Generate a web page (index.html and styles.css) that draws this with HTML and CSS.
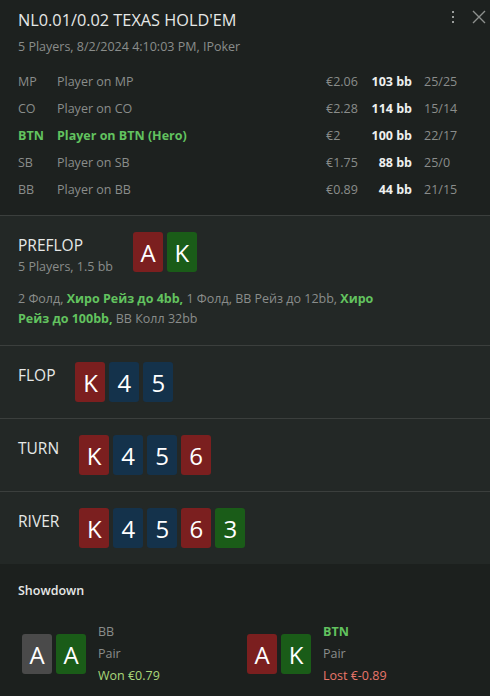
FILE: index.html
```html
<!DOCTYPE html>
<html lang="en">
<head>
    <meta charset="UTF-8">
    <meta name="viewport" content="width=device-width, initial-scale=1.0">
    <title>Hand History</title>
    <link rel="stylesheet" href="styles.css">
</head>
<body>
    <div class="hand-panel">
        <div class="hand-header">
            <div class="title-row">
                <h1>NL0.01/0.02 TEXAS HOLD'EM</h1>
                <div class="header-icons">
                    <svg class="icon-more" width="6" height="16" viewBox="0 0 6 16">
                        <rect x="2" y="2" width="2" height="2" fill="#9a9d9b"/>
                        <rect x="2" y="7" width="2" height="2" fill="#9a9d9b"/>
                        <rect x="2" y="12" width="2" height="2" fill="#9a9d9b"/>
                    </svg>
                    <svg class="icon-close" width="14" height="14" viewBox="0 0 14 14">
                        <path d="M1 1 L13 13 M13 1 L1 13" stroke="#8d908e" stroke-width="1.4" fill="none"/>
                    </svg>
                </div>
            </div>
            <div class="subtitle">5 Players, 8/2/2024 4:10:03 PM, IPoker</div>

            <div class="players">
                <div class="pos">MP</div><div class="name">Player on MP</div><div class="money">€2.06</div><div class="stack">103 bb</div><div class="ratio">25/25</div>
                <div class="pos">CO</div><div class="name">Player on CO</div><div class="money">€2.28</div><div class="stack">114 bb</div><div class="ratio">15/14</div>
                <div class="pos hero">BTN</div><div class="name hero">Player on BTN (Hero)</div><div class="money">€2</div><div class="stack">100 bb</div><div class="ratio">22/17</div>
                <div class="pos">SB</div><div class="name">Player on SB</div><div class="money">€1.75</div><div class="stack">88 bb</div><div class="ratio">25/0</div>
                <div class="pos">BB</div><div class="name">Player on BB</div><div class="money">€0.89</div><div class="stack">44 bb</div><div class="ratio">21/15</div>
            </div>
        </div>

        <div class="street">
            <div class="street-head">
                <div>
                    <div class="street-label">PREFLOP</div>
                    <div class="street-sub">5 Players, 1.5 bb</div>
                </div>
                <div class="cards">
                    <span class="card red">A</span>
                    <span class="card green">K</span>
                </div>
            </div>
            <p class="actions">2 Фолд, <b>Хиро Рейз до 4bb,</b> 1 Фолд, BB Рейз до 12bb, <b>Хиро Рейз до 100bb,</b> BB Колл 32bb</p>
        </div>

        <div class="street">
            <div class="street-head">
                <div class="street-label">FLOP</div>
                <div class="cards">
                    <span class="card red">K</span>
                    <span class="card blue">4</span>
                    <span class="card blue">5</span>
                </div>
            </div>
        </div>

        <div class="street">
            <div class="street-head">
                <div class="street-label">TURN</div>
                <div class="cards">
                    <span class="card red">K</span>
                    <span class="card blue">4</span>
                    <span class="card blue">5</span>
                    <span class="card red">6</span>
                </div>
            </div>
        </div>

        <div class="street">
            <div class="street-head">
                <div class="street-label">RIVER</div>
                <div class="cards">
                    <span class="card red">K</span>
                    <span class="card blue">4</span>
                    <span class="card blue">5</span>
                    <span class="card red">6</span>
                    <span class="card green">3</span>
                </div>
            </div>
        </div>

        <div class="showdown">
            <div class="showdown-title">Showdown</div>
            <div class="hands">
                <div class="hand">
                    <div class="cards">
                        <span class="card gray">A</span>
                        <span class="card green">A</span>
                    </div>
                    <div class="hand-info">
                        <div>BB</div>
                        <div>Pair</div>
                        <div class="won">Won €0.79</div>
                    </div>
                </div>
                <div class="hand">
                    <div class="cards">
                        <span class="card red">A</span>
                        <span class="card green">K</span>
                    </div>
                    <div class="hand-info">
                        <div class="hero">BTN</div>
                        <div>Pair</div>
                        <div class="lost">Lost €-0.89</div>
                    </div>
                </div>
            </div>
        </div>
    </div>
</body>
</html>
```

FILE: styles.css
```css
body {
    margin: 0;
    padding: 0;
    background-color: #1c201e;
    font-family: "Open Sans", "Noto Sans", sans-serif;
    color: #8a8d8b;
}
.hand-panel {
    width: 490px;
    height: 696px;
    overflow: hidden;
}
.hand-header {
    background-color: #1d211f;
    padding: 8px 0 12px 18px;
}
.title-row {
    display: flex;
    justify-content: space-between;
    align-items: flex-start;
}
h1 {
    margin: 0;
    font-size: 16.3px;
    font-weight: normal;
    line-height: 24px;
    color: #e6e8e7;
}
.header-icons {
    display: flex;
    align-items: center;
    gap: 16px;
    padding-right: 4px;
    margin-top: 1px;
}
.icon-more,
.icon-close {
    display: block;
}
.subtitle {
    margin-top: 6px;
    font-size: 12.5px;
    line-height: 18px;
}
.players {
    display: grid;
    grid-template-columns: 39px 1fr 44px 42px 48px;
    margin-top: 12px;
    padding-right: 30px;
    font-size: 12.5px;
    line-height: 27px;
}
.players .stack {
    justify-self: end;
    white-space: nowrap;
    font-weight: bold;
    color: #eef0ef;
}
.players .ratio {
    padding-left: 12px;
}
.hero {
    color: #62c35f;
    font-weight: bold;
}
.street {
    background-color: #232826;
    border-top: 1px solid #3b3f3d;
    padding: 16px 18px;
}
.street-head {
    display: flex;
    align-items: flex-start;
    gap: 20px;
}
.street-label {
    font-size: 15.5px;
    line-height: 26px;
    color: #e6e8e7;
}
.street-sub {
    font-size: 12.5px;
    line-height: 18px;
}
.actions {
    margin: 13px 0 0;
    max-width: 385px;
    font-size: 12.5px;
    line-height: 20px;
}
.actions b {
    color: #62c35f;
}
.cards {
    display: flex;
    gap: 4px;
}
.card {
    display: flex;
    align-items: center;
    justify-content: center;
    width: 30px;
    height: 40px;
    border-radius: 3px;
    font-size: 24px;
    color: #ffffff;
}
.red { background-color: #7b1f1f; }
.blue { background-color: #14324b; }
.green { background-color: #1a5c18; }
.gray { background-color: #4a4a4a; }
.showdown {
    background-color: #1c201e;
    padding: 18px 0 0 18px;
}
.showdown-title {
    font-size: 12.5px;
    font-weight: 600;
    line-height: 18px;
    color: #e6e8e7;
}
.hands {
    display: grid;
    grid-template-columns: 225px 1fr;
    margin-top: 21px;
    padding-left: 4px;
}
.hand {
    display: flex;
    align-items: center;
    gap: 12px;
}
.hand-info {
    font-size: 12.5px;
    line-height: 22px;
}
.won {
    color: #a9d87a;
}
.lost {
    color: #e8766a;
}
```
